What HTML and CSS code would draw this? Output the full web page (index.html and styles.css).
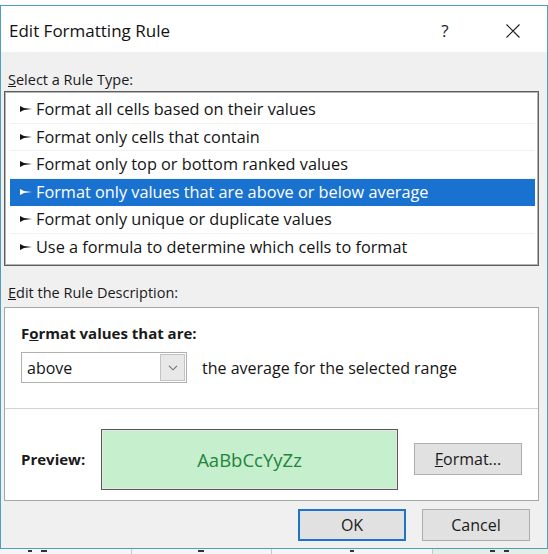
FILE: index.html
```html
<!DOCTYPE html>
<html>
<head>
<meta charset="utf-8">
<link rel="stylesheet" href="styles.css">
</head>
<body>
<div class="screen">
  <div class="dialog">
    <div class="titlebar">
      <span class="title">Edit Formatting Rule</span>
      <span class="help">?</span>
      <span class="close">
        <svg width="16" height="16" viewBox="0 0 16 16"><path d="M1.5 1.5 L14.5 14.5 M14.5 1.5 L1.5 14.5" stroke="#222" stroke-width="1.2" fill="none"/></svg>
      </span>
    </div>
    <div class="content">
      <div class="label"><u>S</u>elect a Rule Type:</div>
      <div class="listbox">
        <div class="row"><svg class="bullet" width="12" height="6" viewBox="0 0 12 6"><polygon points="0,0 4,2 12,3 4,4 0,6"/></svg>Format all cells based on their values</div>
        <div class="row"><svg class="bullet" width="12" height="6" viewBox="0 0 12 6"><polygon points="0,0 4,2 12,3 4,4 0,6"/></svg>Format only cells that contain</div>
        <div class="row"><svg class="bullet" width="12" height="6" viewBox="0 0 12 6"><polygon points="0,0 4,2 12,3 4,4 0,6"/></svg>Format only top or bottom ranked values</div>
        <div class="row selected"><svg class="bullet" width="12" height="6" viewBox="0 0 12 6"><polygon points="0,0 4,2 12,3 4,4 0,6"/></svg>Format only values that are above or below average</div>
        <div class="row"><svg class="bullet" width="12" height="6" viewBox="0 0 12 6"><polygon points="0,0 4,2 12,3 4,4 0,6"/></svg>Format only unique or duplicate values</div>
        <div class="row last"><svg class="bullet" width="12" height="6" viewBox="0 0 12 6"><polygon points="0,0 4,2 12,3 4,4 0,6"/></svg>Use a formula to determine which cells to format</div>
      </div>
      <div class="label desc-label"><u>E</u>dit the Rule Description:</div>
      <div class="descbox">
        <div class="desc-top">
          <div class="bold">F<u>o</u>rmat values that are:</div>
          <div class="select-row">
            <div class="combo">
              <span class="combo-text">above</span>
              <span class="combo-btn">
                <svg width="10" height="6" viewBox="0 0 10 6"><polyline points="1,0.8 5,4.8 9,0.8" fill="none" stroke="#707070" stroke-width="1.1"/></svg>
              </span>
            </div>
            <span class="after">the average for the selected range</span>
          </div>
        </div>
        <div class="desc-bottom">
          <span class="bold preview-label">Preview:</span>
          <div class="preview">AaBbCcYyZz</div>
          <div class="btn format-btn"><u>F</u>ormat...</div>
        </div>
      </div>
      <div class="actions">
        <div class="btn ok">OK</div>
        <div class="btn">Cancel</div>
      </div>
    </div>
  </div>
  <div class="sheet">
    <span class="cell c1"><i class="mark m1"></i><i class="mark m2"></i></span>
    <span class="cell c2"><i class="mark m3"></i></span>
    <span class="cell c3"><i class="mark m4"></i></span>
    <span class="cell c4"><i class="mark m5"></i><i class="mark m6"></i></span>
  </div>
</div>
</body>
</html>
```

FILE: styles.css
```css
* { box-sizing: border-box; }
html, body {
  margin: 0;
  padding: 0;
  background: #ffffff;
  width: 548px;
  height: 554px;
  overflow: hidden;
  font-family: "Open Sans", "Noto Sans", sans-serif;
  font-size: 16px;
  color: #141414;
}
.screen {
  padding-top: 5px;
}
.dialog {
  width: 548px;
  height: 544px;
  border: 1px solid #4f9fb8;
  background: #f0f0f0;
  display: flex;
  flex-direction: column;
}
.titlebar {
  height: 46px;
  background: #ffffff;
  display: flex;
  align-items: center;
  padding-left: 8px;
  padding-top: 3px;
}
.title {
  font-size: 17px;
  flex: 1;
  color: #111;
}
.help {
  font-size: 17px;
  width: 20px;
  text-align: center;
  margin-right: 50px;
  color: #222;
}
.close {
  width: 16px;
  height: 16px;
  margin-right: 26px;
  display: flex;
}
.content {
  padding: 18px 8px 0 3px;
  display: flex;
  flex-direction: column;
}
.label {
  height: 20px;
  line-height: 20px;
  padding-left: 4px;
  font-size: 14.5px;
  color: #1a1a1a;
}
.listbox {
  margin-top: 1px;
  height: 175px;
  border: 1px solid #5e5e5e;
  box-shadow: inset 0 0 0 1px #b4b4b4;
  background: #ffffff;
  padding: 4px 3px 4px 5px;
}
.row {
  height: 27.5px;
  display: flex;
  align-items: center;
  padding-left: 10px;
  border-bottom: 1px solid #f2f2f2;
  font-size: 16.3px;
  color: #141414;
}
.row.last { border-bottom: none; }
.bullet {
  margin-right: 4px;
  fill: #141414;
  flex: none;
}
.row.selected {
  background: #1a72d0;
  color: #ffffff;
  border-bottom-color: #1a72d0;
}
.row.selected .bullet { fill: #ffffff; }
.desc-label {
  margin-top: 17px;
}
.descbox {
  margin-top: 4px;
  height: 194px;
  border: 1px solid #a6a6a6;
  background: #ffffff;
  display: flex;
  flex-direction: column;
}
.desc-top {
  height: 101px;
  padding: 15px 0 0 16px;
  border-bottom: 1px solid #d2d2d2;
}
.bold {
  font-weight: 700;
  font-size: 15px;
  height: 20px;
  line-height: 20px;
  color: #1a1a1a;
}
.select-row {
  margin-top: 9px;
  display: flex;
  align-items: center;
}
.combo {
  width: 166px;
  height: 31px;
  border: 1px solid #b0b0b0;
  display: flex;
  align-items: center;
  padding: 0 1px 0 5px;
  background: #fff;
}
.combo-text { flex: 1; }
.combo-btn {
  width: 25px;
  height: 27px;
  border: 1px solid #c4c4c4;
  background: #e8e8e8;
  display: flex;
  align-items: center;
  justify-content: center;
}
.after {
  margin-left: 15px;
}
.desc-bottom {
  flex: 1;
  display: flex;
  align-items: center;
  padding-left: 16px;
  padding-top: 9px;
}
.preview-label {
  width: 80px;
}
.preview {
  width: 297px;
  height: 61px;
  border: 1px solid #5a5a5a;
  box-shadow: inset 0 0 0 1px #e6e6e6;
  background: #c6efce;
  color: #24843a;
  font-size: 18.5px;
  display: flex;
  align-items: center;
  justify-content: center;
}
.btn {
  width: 108px;
  height: 32px;
  background: #e1e1e1;
  border: 1px solid #adadad;
  display: flex;
  align-items: center;
  justify-content: center;
  color: #1a1a1a;
}
.format-btn {
  margin-left: 16px;
}
.actions {
  margin-top: 8px;
  display: flex;
  justify-content: flex-end;
  gap: 16px;
  padding-right: 9px;
}
.btn.ok {
  border: 2px solid #1f74c9;
}
.sheet {
  height: 5px;
  display: flex;
  background: #f4f6f6;
}
.cell {
  height: 5px;
  border-right: 1px solid #c8c8c8;
  position: relative;
}
.c1 { width: 132px; }
.c2 { width: 140px; }
.c3 { width: 161px; }
.c4 { flex: 1; background: #e3efe6; border-right: none; }
.mark {
  position: absolute;
  top: 1px;
  height: 2px;
  width: 4px;
  background: #333;
}
.m1 { left: 28px; }
.m2 { left: 41px; width: 6px; }
.m3 { left: 66px; width: 6px; }
.m4 { left: 78px; }
.m5 { left: 57px; width: 5px; }
.m6 { left: 71px; width: 5px; }
```
